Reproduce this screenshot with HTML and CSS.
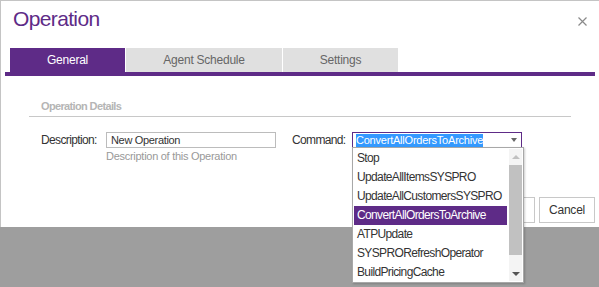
FILE: index.html
```html
<!DOCTYPE html>
<html lang="en">

<head>
    <meta charset="UTF-8">
    <meta name="viewport" content="width=device-width, initial-scale=1.0">
    <title>Operation</title>
    <link rel="stylesheet" href="styles.css">
</head>

<body>
    <div class="dialog">
        <div class="dialog-header">
            <h1>Operation</h1>
            <svg class="close" width="9" height="9" viewBox="0 0 9 9">
                <path d="M0.5 0.5 L8.5 8.5 M8.5 0.5 L0.5 8.5" stroke="#8a8a8a" stroke-width="1.2" fill="none" />
            </svg>
        </div>

        <div class="tabs">
            <div class="tab active">General</div>
            <div class="tab agent">Agent Schedule</div>
            <div class="tab">Settings</div>
        </div>
        <div class="tab-bar"></div>

        <div class="section">
            <div class="section-title">Operation Details</div>
            <div class="form-row">
                <div class="field">
                    <label class="label-desc" for="description">Description:</label>
                    <div>
                        <input type="text" id="description" class="text-input" value="New Operation">
                        <div class="hint">Description of this Operation</div>
                    </div>
                </div>
                <div class="field command-field">
                    <label class="label-cmd">Command:</label>
                    <div class="select-box">
                        <span class="select-value">ConvertAllOrdersToArchive</span>
                        <span class="select-arrow"></span>
                    </div>
                </div>
            </div>
        </div>

        <div class="dialog-footer">
            <button class="btn btn-save">Save</button>
            <button class="btn">Cancel</button>
        </div>
    </div>

    <!-- open list of the Command select, drawn over the dialog -->
    <div class="dropdown">
        <ul class="options">
            <li>Stop</li>
            <li>UpdateAllItemsSYSPRO</li>
            <li>UpdateAllCustomersSYSPRO</li>
            <li class="selected">ConvertAllOrdersToArchive</li>
            <li>ATPUpdate</li>
            <li>SYSPRORefreshOperator</li>
            <li>BuildPricingCache</li>
        </ul>
        <div class="scrollbar">
            <span class="arrow-up"></span>
            <div class="thumb"></div>
            <span class="arrow-down"></span>
        </div>
    </div>
</body>

</html>
```

FILE: styles.css
```css
html {
    background-color: #9e9e9e;
}

body {
    font-family: "Liberation Sans", Arial, sans-serif;
    letter-spacing: -0.04em;
    margin: 0;
    padding: 0;
    min-height: 287px;
    position: relative;
}

.dialog {
    background: #ffffff;
    height: 227px;
    box-sizing: border-box;
    border-top: 1px solid #c4c4c4;
    border-left: 1px solid #c4c4c4;
    display: flex;
    flex-direction: column;
}

.dialog-header {
    display: flex;
    justify-content: space-between;
    align-items: center;
    height: 38px;
    padding: 0 12px 0 12px;
}

h1 {
    margin: 0;
    font-size: 21px;
    font-weight: normal;
    color: #5e2b87;
    line-height: 24px;
    padding-bottom: 2px;
}

.close {
    display: block;
    margin-top: 2px;
}

.tabs {
    display: flex;
    gap: 1px;
    margin: 9px 0 0 9px;
}

.tab {
    width: 115px;
    height: 24px;
    line-height: 24px;
    background: #e0e0e0;
    color: #666;
    font-size: 12px;
    letter-spacing: -0.02em;
    text-align: center;
}

.tab.agent {
    width: 156px;
}

.tab.active {
    background: #5e2b87;
    color: #fff;
}

.tab-bar {
    height: 4px;
    width: 590px;
    margin-left: 4px;
    background: #5e2b87;
}

.section {
    margin: 24px 0 0 28px;
    width: 542px;
}

.section-title {
    font-size: 11px;
    font-weight: bold;
    color: #b5b5b5;
    padding: 0 0 4px 12px;
    border-bottom: 1px solid #c8c8c8;
}

.form-row {
    display: flex;
    padding: 15px 0 0 12px;
}

.field {
    display: flex;
    align-items: flex-start;
}

label {
    font-size: 12px;
    color: #333;
    line-height: 16px;
}

.label-desc {
    width: 65px;
}

.text-input {
    width: 170px;
    height: 16px;
    box-sizing: border-box;
    border: 1px solid #bcbcbc;
    padding: 0 4px;
    font-family: inherit;
    font-size: 11px;
    letter-spacing: -0.03em;
    color: #333;
    margin: 0;
    display: block;
}

.hint {
    font-size: 11px;
    letter-spacing: -0.025em;
    color: #999;
    margin-top: 2px;
}

.command-field {
    margin-left: 16px;
}

.label-cmd {
    width: 60px;
}

.select-box {
    width: 170px;
    height: 16px;
    box-sizing: border-box;
    border: 1px solid #5e2b87;
    display: flex;
    align-items: center;
    justify-content: space-between;
    padding: 0 4px 0 3px;
}

.select-value {
    background: #3399ff;
    color: #fff;
    font-size: 11px;
    letter-spacing: -0.02em;
    line-height: 13px;
}

.select-arrow {
    border-left: 3px solid transparent;
    border-right: 3px solid transparent;
    border-top: 4px solid #666;
}

.dropdown {
    position: absolute;
    left: 352px;
    top: 147px;
    z-index: 10;
    width: 172px;
    height: 136px;
    box-sizing: border-box;
    background: #fff;
    border: 1px solid #a8a8a8;
    box-shadow: 1px 1px 2px rgba(0, 0, 0, 0.2);
    display: flex;
    padding: 1px 1px 1px 1px;
}

.options {
    list-style: none;
    margin: 0;
    padding: 0;
    flex: 1;
}

.options li {
    height: 19px;
    line-height: 19px;
    font-size: 12px;
    color: #333;
    padding-left: 3px;
    white-space: nowrap;
}

.options li.selected {
    background: #5e2b87;
    color: #fff;
}

.scrollbar {
    width: 13px;
    margin-left: 2px;
    display: flex;
    flex-direction: column;
    align-items: center;
    background: #f4f4f4;
}

.arrow-up {
    margin-top: 6px;
    border-left: 4px solid transparent;
    border-right: 4px solid transparent;
    border-bottom: 4px solid #c0c0c0;
}

.thumb {
    width: 13px;
    height: 90px;
    margin-top: 6px;
    background: #c1c1c1;
}

.arrow-down {
    margin-top: auto;
    margin-bottom: 5px;
    border-left: 4px solid transparent;
    border-right: 4px solid transparent;
    border-top: 4px solid #555;
}

.dialog-footer {
    margin-top: auto;
    display: flex;
    justify-content: flex-end;
    gap: 4px;
    padding: 0 4px 4px 0;
}

.btn {
    height: 26px;
    padding: 0 9px;
    background: #fff;
    border: 1px solid #c8c8c8;
    font-family: inherit;
    font-size: 12px;
    letter-spacing: -0.02em;
    color: #333;
    border-radius: 0;
}

.btn-save {
    padding: 0 16px;
}
```
